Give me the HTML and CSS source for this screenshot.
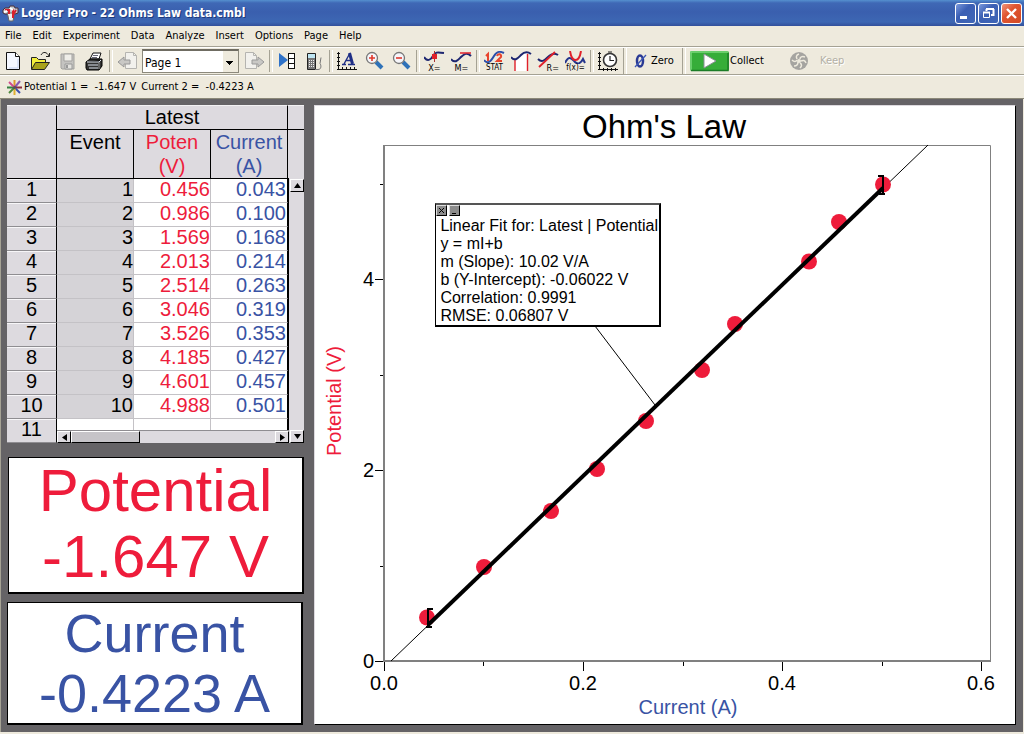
FILE: index.html
```html
<!DOCTYPE html>
<html lang="en">
<head>
<meta charset="utf-8">
<title>Logger Pro - 22 Ohms Law data.cmbl</title>
<link rel="stylesheet" href="styles.css">
</head>
<body>
<header class="titlebar">
  <svg class="logo" width="17" height="17" viewBox="0 0 17 17" aria-hidden="true">
    <path d="M1 5l2-2h4l1-2h4l1 2h3v5l-3 1H3L1 8z" fill="#c4c8ce" stroke="#4a3038"/>
    <path d="M5 8h7v3l-1 5H7l-1-5z" fill="#eee" stroke="#666"/>
    <path d="M3 5h4v4M11 4v9M14 5l-3 5" fill="none" stroke="#d8202c" stroke-width="2"/>
    <path d="M8 3l3 2M2 7l3-1" stroke="#fff" stroke-width="2"/>
  </svg>
  <h1 class="title">Logger Pro - 22 Ohms Law data.cmbl</h1>
  <div class="window-buttons">
    <button class="winbtn" aria-label="Minimize"><svg width="19" height="19" viewBox="0 0 19 19"><path d="M4 12h7v3H4z" fill="#fff"/></svg></button>
    <button class="winbtn" aria-label="Restore"><svg width="19" height="19" viewBox="0 0 19 19"><path d="M7 5h8M7.500 5v2M14.500 5v6H12M4 8.500h7" fill="none" stroke="#fff" stroke-width="2"/><path d="M4.500 8.500h6v5h-6z" fill="none" stroke="#fff"/></svg></button>
    <button class="winbtn winbtn-close" aria-label="Close"><svg width="19" height="19" viewBox="0 0 19 19"><path d="M5 5l9 9M14 5l-9 9" stroke="#fff" stroke-width="2.400"/></svg></button>
  </div>
</header>

<nav class="menubar">
  <button>File</button><button>Edit</button><button>Experiment</button><button>Data</button><button>Analyze</button><button>Insert</button><button>Options</button><button>Page</button><button>Help</button>
</nav>

<div class="toolbar">
  <button class="tool" aria-label="New"><svg width="21" height="21" viewBox="0 0 21 21"><path d="M3.500 1.500h9l4 4v13h-13z" fill="#f4f7ff" stroke="#111"/><path d="M12.500 1.500v4h4" fill="#fff" stroke="#111"/><path d="M15 8v9H6" fill="none" stroke="#c3d0f0"/></svg></button>
  <button class="tool" aria-label="Open"><svg width="21" height="21" viewBox="0 0 21 21"><path d="M1.500 18V6.500h5l2 2h7V12" fill="#f3ee3c" stroke="#222"/><path d="M1.500 18.500l4-7h14l-5 7z" fill="#a8a21c" stroke="#222"/><path d="M11 4c2-4 6-3 8 1M19.500 2v3.500H16" fill="none" stroke="#222"/></svg></button>
  <button class="tool" aria-label="Save" disabled><svg width="21" height="21" viewBox="0 0 21 21"><path d="M4 3h13v15H5l-1-1z" fill="#c4c3c0" stroke="#a3a29f"/><path d="M7 3h8v7H7z" fill="#efeee9" stroke="#a3a29f"/><path d="M8 13h7v5H8z" fill="#e4e3de" stroke="#999"/><path d="M9 14h2v3H9z" fill="#999"/></svg></button>
  <button class="tool" aria-label="Print"><svg width="21" height="21" viewBox="0 0 21 21"><path d="M6 8l3-6h8l-2 6z" fill="#fff" stroke="#111"/><path d="M9 4.500h5M8 6.500h5" stroke="#667"/><path d="M2 11l4-3h12v7l-3 4H3l-1-2z" fill="#333" stroke="#000"/><path d="M3 11h12l2-2M4 14h10M5 17h9" stroke="#dde3ee"/><path d="M15 11v7" stroke="#999"/></svg></button>
  <span class="sep"></span>
  <button class="tool" aria-label="Previous page" disabled><svg width="21" height="21" viewBox="0 0 21 21"><path d="M8.500 1.500h8l3 3v13h-11z" fill="#f2f1ed" stroke="#b5b4b0"/><path d="M16.500 1.500v3h3" fill="none" stroke="#b5b4b0"/><path d="M1 11l6-5v3h6v4H7v3z" fill="#c9c8c5" stroke="#999"/></svg></button>
  <select class="page-select" aria-label="Page"><option>Page 1</option></select>
  <button class="tool" aria-label="Next page" disabled><svg width="21" height="21" viewBox="0 0 21 21"><path d="M1.500 1.500h8l3 3v13h-11z" fill="#f2f1ed" stroke="#b5b4b0"/><path d="M9.500 1.500v3h3" fill="none" stroke="#b5b4b0"/><path d="M20 11l-6-5v3H8v4h6v3z" fill="#c9c8c5" stroke="#999"/></svg></button>
  <span class="sep"></span>
  <button class="tool" aria-label="Import data"><svg width="21" height="21" viewBox="0 0 21 21"><path d="M2 2l9 7-9 7z" fill="#2f72c8"/><path d="M12 3h5v4h-5zM12 8h5v4h-5zM12 13h5v4h-5z" fill="#fff"/><path d="M11.500 2v16M17.500 2v16M11 2.500h7M11 7.500h7M11 12.500h7M11 17.500h7" stroke="#111"/></svg></button>
  <button class="tool" aria-label="Calculator"><svg width="21" height="21" viewBox="0 0 21 21"><path d="M3.500 2.500h8v16h-8z" fill="#777" stroke="#222"/><path d="M4 3h7v4H4z" fill="#bfe6f2"/><path d="M5 9.500h6M5 11.500h6M5 13.500h6M5 15.500h6" stroke="#eee" stroke-dasharray="1 1"/><path d="M11 18.500h3c4 0 3-5 2-6l1-6" fill="none" stroke="#777"/></svg></button>
  <span class="sep"></span>
  <button class="tool" aria-label="Autoscale"><svg width="21" height="21" viewBox="0 0 21 21"><path d="M1.500 1v18M0 18.500h20M0 2.500h3M0 6.500h3M0 10.500h3M0 14.500h3M5.500 16v3M9.500 16v3M13.500 16v3M17.500 16v3" stroke="#111"/><path d="M5 13.500h4M11 13.500h7M7 13l6-11M8.500 9.500h6" stroke="#1f2f86" stroke-width="1.400"/><path d="M12.500 2l3 11" stroke="#1f2f86" stroke-width="3"/></svg></button>
  <button class="tool" aria-label="Zoom in"><svg width="21" height="21" viewBox="0 0 21 21"><path d="M12 11l6 6" stroke="#2f72b8" stroke-width="4"/><circle cx="8" cy="7" r="5.500" fill="#f6f6fa" stroke="#777" stroke-width="1.300"/><path d="M5 7h6M8 4v6" stroke="#e0382c" stroke-width="1.600"/></svg></button>
  <button class="tool" aria-label="Zoom out"><svg width="21" height="21" viewBox="0 0 21 21"><path d="M12 11l6 6" stroke="#2f72b8" stroke-width="4"/><circle cx="8" cy="7" r="5.500" fill="#f6f6fa" stroke="#777" stroke-width="1.300"/><path d="M5 7h6" stroke="#e0382c" stroke-width="1.600"/></svg></button>
  <span class="sep"></span>
  <button class="tool labelled" aria-label="Examine"><svg width="21" height="13" viewBox="0 0 21 13"><path d="M0 6c3 5 7 3 9-1s4-4 11-3" fill="none" stroke="#1d2670" stroke-width="2"/><path d="M10.500 0v11" stroke="#a33"/><path d="M8 3h5v5H8z" fill="#e0202a"/></svg><span>X=</span></button>
  <button class="tool labelled" aria-label="Tangent line"><svg width="21" height="13" viewBox="0 0 21 13"><path d="M0 8c4 5 7 1 10-2s6-5 10-1" fill="none" stroke="#1d2670" stroke-width="2"/><path d="M9 2h11" stroke="#e0202a" stroke-width="1.500"/></svg><span>M=</span></button>
  <span class="sep"></span>
  <button class="tool labelled" aria-label="Statistics"><svg width="21" height="13" viewBox="0 0 21 13"><path d="M0 9c4 5 7 1 10-4s6-5 10-3" fill="none" stroke="#2a4da8" stroke-width="2"/><path d="M2 5l2-2v7M13 5c1-3 5-2 4 1l-4 4h5" fill="none" stroke="#e8442c" stroke-width="2"/></svg><span class="narrow">STAT</span></button>
  <button class="tool" aria-label="Integral"><svg width="21" height="21" viewBox="0 0 21 21"><path d="M4 8c4 0 5-6 12-6v18H4z" fill="#fff"/><path d="M4 8v12M16.500 3v17" stroke="#e0202a" stroke-width="1.400"/><path d="M0 6c4 5 7 1 10-2s6-4 10-1" fill="none" stroke="#1d2670" stroke-width="2"/></svg></button>
  <button class="tool labelled" aria-label="Linear fit"><svg width="21" height="13" viewBox="0 0 21 13" overflow="visible"><path d="M0 8c4 4 7 1 10-2s6-5 10-2" fill="none" stroke="#1d2670" stroke-width="2"/><path d="M1 16L17 1" stroke="#e0202a" stroke-width="1.800"/></svg><span class="right">R=</span></button>
  <button class="tool labelled" aria-label="Curve fit"><svg width="21" height="13" viewBox="0 0 21 13"><path d="M0 12c4-9 7-4 10-1s6 1 8-3l2 4" fill="none" stroke="#24358c" stroke-width="2"/><path d="M5 0c2 12 9 12 11 0" fill="none" stroke="#e0202a" stroke-width="2"/></svg><span class="narrow">f(x)=</span></button>
  <span class="sep"></span>
  <button class="tool" aria-label="Data collection"><svg width="21" height="21" viewBox="0 0 21 21"><path d="M1.500 1v18M0 18.500h20M0 2.500h3M0 6.500h3M0 10.500h3M0 14.500h3M5.500 17v3M9.500 17v3M13.500 17v3M17.500 17v3" stroke="#111"/><circle cx="12" cy="9" r="6.500" fill="#fff" stroke="#333" stroke-width="1.600"/><path d="M12 5v4.500h4M10 1h4" fill="none" stroke="#222" stroke-width="1.200"/></svg></button>
  <span class="sep sep-tall"></span>
  <button class="zero"><svg width="13" height="19" viewBox="0 0 13 19" aria-hidden="true"><ellipse cx="6" cy="9" rx="3" ry="5.500" fill="none" stroke="#2a3a94" stroke-width="2.500"/><path d="M1 15L12 3" stroke="#3c57b5" stroke-width="1.300"/></svg>Zero</button>
  <span class="sep sep-tall"></span>
  <button class="collect"><svg width="40" height="22" viewBox="0 0 40 22" aria-hidden="true"><rect x="1" y="1" width="39" height="20" rx="2" fill="#36ad39"/><path d="M2 20V2h37" fill="none" stroke="#7bd77c" stroke-width="1.500"/><path d="M2 20.500h37V3" fill="none" stroke="#1b7d27" stroke-width="1.500"/><path d="M15 4l12 7-12 7z" fill="#fff" stroke="#8a8f95"/></svg>Collect</button>
  <button class="keep" disabled><svg width="20" height="20" viewBox="0 0 20 20" aria-hidden="true"><circle cx="10" cy="10" r="9" fill="#a5a4a0"/><circle cx="10" cy="10" r="2" fill="#eeeadd"/><path d="M10 3c-3 1-3 3-2 5M16 6c-3-1-5 0-5 2M17 12c-1-3-3-3-5-2M11 17c2-2 2-4 0-5M5 15c3 0 4-2 4-4M3 9c2 2 4 2 5 0" fill="none" stroke="#eeeadd" stroke-width="1.500"/></svg>Keep</button>
</div>

<div class="status">
  <svg width="17" height="17" viewBox="0 0 17 17" aria-hidden="true"><g stroke-width="2"><path d="M8.500 8V1" stroke="#e09a2c"/><path d="M9 8l5-6" stroke="#8a5ab0"/><path d="M9 8.500h7" stroke="#8a3040"/><path d="M9 9l5 5" stroke="#3b4fae"/><path d="M8.500 9v7" stroke="#e0b030"/><path d="M8 9l-5 5" stroke="#4c8a3c"/><path d="M8 8.500H1" stroke="#35803f"/><path d="M8 8L3 3" stroke="#d04c8c"/></g><circle cx="8.500" cy="8.500" r="1.500" fill="#555"/></svg>
  <span>Potential 1 =&nbsp; -1.647 V</span><span>Current 2 =&nbsp; -0.4223 A</span>
</div>

<main class="workspace">
  <section class="side">
    <div class="data">
      <table class="grid">
        <colgroup><col class="c-row"><col><col><col></colgroup>
        <thead>
          <tr class="group"><th rowspan="2" class="corner"></th><th colspan="3">Latest</th></tr>
          <tr class="names"><th>Event</th><th class="red">Poten<br>(V)</th><th class="blue">Current<br>(A)</th></tr>
        </thead>
        <tbody>
          <tr><th>1</th><td>1</td><td>0.456</td><td>0.043</td></tr>
          <tr><th>2</th><td>2</td><td>0.986</td><td>0.100</td></tr>
          <tr><th>3</th><td>3</td><td>1.569</td><td>0.168</td></tr>
          <tr><th>4</th><td>4</td><td>2.013</td><td>0.214</td></tr>
          <tr><th>5</th><td>5</td><td>2.514</td><td>0.263</td></tr>
          <tr><th>6</th><td>6</td><td>3.046</td><td>0.319</td></tr>
          <tr><th>7</th><td>7</td><td>3.526</td><td>0.353</td></tr>
          <tr><th>8</th><td>8</td><td>4.185</td><td>0.427</td></tr>
          <tr><th>9</th><td>9</td><td>4.601</td><td>0.457</td></tr>
          <tr><th>10</th><td>10</td><td>4.988</td><td>0.501</td></tr>
          <tr class="blank"><th>11</th><td></td><td></td><td></td></tr>
        </tbody>
      </table>
      <div class="vcol">
        <div class="vhead-a"></div>
        <div class="vhead-b"></div>
        <div class="vscroll">
          <button class="arrow" aria-label="Scroll up"><svg width="7" height="7" viewBox="0 0 7 7"><path d="M0 6l3.500-5L7 6z"/></svg></button>
          <button class="arrow" aria-label="Scroll down"><svg width="7" height="7" viewBox="0 0 7 7"><path d="M0 1l3.500 5L7 1z"/></svg></button>
        </div>
      </div>
      <div class="hscroll">
        <button class="arrow" aria-label="Scroll left"><svg width="7" height="7" viewBox="0 0 7 7"><path d="M6 0L1 3.500 6 7z"/></svg></button>
        <button class="thumb" aria-label="Scroll position"></button>
        <button class="arrow last" aria-label="Scroll right"><svg width="7" height="7" viewBox="0 0 7 7"><path d="M1 0l5 3.500L1 7z"/></svg></button>
      </div>
    </div>
    <div class="meter meter-v"><div>Potential</div><div>-1.647 V</div></div>
    <div class="meter meter-a"><div>Current</div><div>-0.4223 A</div></div>
  </section>

  <section class="graph">
    <svg class="plot" viewBox="315 106 700 618" role="img" aria-label="Ohm's Law">
      <text x="664" y="138" class="plot-title">Ohm's Law</text>
      <path d="M384 145.500h606.500V661" class="frame"/>
      <path d="M384 145v517M383 661h608" class="axis"/>
      <path d="M375 661.500h8M375 470.500h8M375 279.500h8M380 566.500h3M380 375.500h3M380 184.500h3M384.500 662v9M583.500 662v9M782.500 662v9M981.500 662v9M483.500 662v4M683.500 662v4M882.500 662v4" class="ticks"/>
      <g class="ylab"><text x="374" y="668">0</text><text x="374" y="477">2</text><text x="374" y="286">4</text></g>
      <g class="xlab"><text x="384" y="690">0.0</text><text x="583" y="690">0.2</text><text x="782" y="690">0.4</text><text x="981" y="690">0.6</text></g>
      <text x="688" y="714" class="xtitle">Current (A)</text>
      <text transform="translate(341 401) rotate(-90)" class="ytitle">Potential (V)</text>
      <path d="M391 661L928 145M595 326l60 79" class="thin"/>
      <g class="points"><circle cx="427" cy="617.500" r="8"/><circle cx="484" cy="567" r="8"/><circle cx="551" cy="511" r="8"/><circle cx="597" cy="469" r="8"/><circle cx="646" cy="421" r="8"/><circle cx="702" cy="370" r="8"/><circle cx="735" cy="324" r="8"/><circle cx="809" cy="261.500" r="8"/><circle cx="839" cy="222" r="8"/><circle cx="883" cy="184.500" r="8"/></g>
      <path d="M428 625L883 188" class="fit"/>
      <path d="M433 609h-5v18h4M426 627h3M878 176h5v18h-4M881 194h4" class="bracket"/>
    </svg>
    <div class="fitbox">
      <div class="fitbox-buttons"><button aria-label="Close fit"><svg width="9" height="9" viewBox="0 0 9 9"><path d="M2 2l5 5M7 2L2 7" stroke="#000"/></svg></button><button aria-label="Minimize fit"><svg width="9" height="9" viewBox="0 0 9 9"><path d="M2 7.500h4" stroke="#000"/></svg></button></div>
      Linear Fit for: Latest | Potential<br>y = mI+b<br>m (Slope): 10.02 V/A<br>b (Y-Intercept): -0.06022 V<br>Correlation: 0.9991<br>RMSE: 0.06807 V
    </div>
  </section>
</main>
</body>
</html>
```
FILE: styles.css
```css
* { box-sizing: border-box; }

body {
  margin: 0;
  min-height: 100vh;
  display: flex;
  flex-direction: column;
  background: #eeeadd;
  color: #000;
  font: 11px/14px "DejaVu Sans Condensed", "DejaVu Sans", sans-serif;
  padding-bottom: 2px;
}

button {
  margin: 0;
  padding: 0;
  border: 0;
  background: none;
  color: inherit;
  font: inherit;
}

svg { display: block; flex: none; }

/* Title bar */
.titlebar {
  height: 26px;
  display: flex;
  align-items: center;
  gap: 2px;
  padding: 0 2px;
  background: linear-gradient(#5590cf 0, #3f68b5 3px, #3a5fae 12px, #3d67b3 22px, #33509b 26px);
}
.title {
  flex: 1;
  margin: 0;
  color: #fff;
  font: bold 12px/18px "DejaVu Sans Condensed", "DejaVu Sans", sans-serif;
  text-shadow: 1px 1px 0 #1e3a7c;
}
.window-buttons { display: flex; gap: 2px; }
.winbtn {
  width: 21px;
  height: 21px;
  border: 1px solid #fff;
  border-radius: 3px;
  background: linear-gradient(135deg, #7b9add, #3b5fb4 40%, #3f66b6);
}
.winbtn-close { background: linear-gradient(135deg, #f0947a, #e05531 40%, #d24a24); }

/* Menu */
.menubar {
  height: 21px;
  display: flex;
  align-items: center;
  gap: 11px;
  padding: 0 5px;
  border-bottom: 1px solid #a5a294;
}

/* Toolbar */
.toolbar {
  height: 28px;
  display: flex;
  align-items: center;
  border-top: 1px solid #fff;
  border-bottom: 1px solid #a5a294;
}
.tool {
  width: 27px;
  height: 24px;
  display: flex;
  align-items: center;
  justify-content: center;
}
.labelled { flex-direction: column; }
.labelled span {
  font: 9px/8px "DejaVu Sans Condensed", sans-serif;
}
.labelled .narrow { font-size: 8px; }
.labelled .right { align-self: flex-end; padding-right: 3px; }
.sep {
  width: 6px;
  height: 22px;
  display: flex;
  justify-content: center;
}
.sep::before {
  content: "";
  width: 2px;
  border-left: 1px solid #a5a294;
  border-right: 1px solid #fff;
}
.sep-tall { height: 26px; }
.page-select {
  appearance: none;
  width: 97px;
  height: 24px;
  margin: 0 2px 0 1px;
  padding: 3px 2px 0;
  border: 1px solid #8c897c;
  border-top: 2px solid #6f6c62;
  border-radius: 0;
  color: #000;
  font: 12px/16px "DejaVu Sans Condensed", sans-serif;
  background:
    linear-gradient(#000, #000) right 5px top 10px / 7px 1px no-repeat,
    linear-gradient(#000, #000) right 6px top 11px / 5px 1px no-repeat,
    linear-gradient(#000, #000) right 7px top 12px / 3px 1px no-repeat,
    linear-gradient(#000, #000) right 8px top 13px / 1px 1px no-repeat,
    linear-gradient(#eeeadd, #eeeadd) right / 15px 100% no-repeat,
    #fff;
}
.zero { width: 53px; display: flex; align-items: center; gap: 4px; padding-left: 6px; }
.collect { width: 102px; display: flex; align-items: center; gap: 1px; padding-left: 2px; }
.keep { display: flex; align-items: center; gap: 11px; color: #b3b0a5; text-shadow: 1px 1px 0 #fff; }

/* Readings line */
.status {
  height: 24px;
  display: flex;
  align-items: center;
  gap: 5px;
  padding: 0 6px;
  border-top: 1px solid #fff;
  border-bottom: 1px solid #8b8878;
}
.status svg { margin-right: -4px; }

/* Workspace */
.workspace {
  flex: 1;
  display: flex;
  gap: 10px;
  padding: 6px 7px 7px 6px;
  background: #656366;
  border-left: 1px solid #a5a294;
  border-right: 1px solid #eeeadd;
  font-family: "Liberation Sans", Arial, sans-serif;
}
.side { width: 297px; flex: none; display: flex; flex-direction: column; }

/* Data table */
.data { position: relative; display: flex; background: #dddadf; }
.grid {
  width: 281px;
  table-layout: fixed;
  border-collapse: separate;
  border-spacing: 0;
  font-size: 20px;
  line-height: 24px;
}
.c-row { width: 50px; }
.grid th, .grid td {
  height: 24px;
  padding: 0;
  font-weight: normal;
}
.grid thead th {
  border-right: 1px solid #000;
  border-bottom: 1px solid #000;
  border-top: 1px solid #f2f1f3;
  vertical-align: top;
}
.grid .group th { height: 25px; line-height: 23px; }
.grid .names th { height: 48px; line-height: 24px; border-top: 0; }
.grid .names th, .vhead-b { border-bottom: 0; }
.grid .names th, .grid .group .corner { border-bottom: 1px solid #000; }
.grid tbody th {
  border-right: 1px solid #000;
  border-bottom: 1px solid #8f8d91;
  line-height: 21px;
  vertical-align: top;
  box-shadow: inset 0 1px #f7f6f8;
}
.grid tbody td {
  background: #fff;
  border-right: 1px solid #c4c2c6;
  border-bottom: 1px solid #c4c2c6;
  text-align: right;
  line-height: 21px;
  vertical-align: top;
}
.grid tbody td:nth-child(2) { background: #d5d3d7; }
.grid tbody td:nth-child(3), .grid .red { color: #ee1c3b; }
.grid tbody td:nth-child(4), .grid .blue { color: #3953a4; }
.grid tbody td:nth-child(4) { border-right-color: #000; padding-right: 1px; }
.grid tbody .blank td { background: #fff; }
.vcol { flex: 1; display: flex; flex-direction: column; }
.vhead-a { height: 25px; border-bottom: 1px solid #000; border-top: 1px solid #f2f1f3; }
.vhead-b { height: 48px; }
.vscroll {
  flex: 1;
  display: flex;
  flex-direction: column;
  justify-content: space-between;
  padding: 1px 0 0 2px;
  border-left: 1px solid #000;
  padding-left: 1px;
}
.arrow {
  width: 14px;
  height: 13px;
  display: flex;
  align-items: center;
  justify-content: center;
  background: #dddadf;
  border: 1px solid #fff;
  border-right-color: #000;
  border-bottom-color: #000;
}
.hscroll {
  position: absolute;
  left: 50px;
  right: 15px;
  bottom: 0;
  height: 13px;
  display: flex;
  background: #dddadf;
  border-top: 1px solid #8f8d91;
}
.hscroll .arrow { height: 12px; }
.hscroll .last { margin-left: auto; }
.thumb {
  width: 69px;
  background: #c6c4c8;
  border: 1px solid #fff;
  border-right-color: #000;
  border-bottom-color: #000;
}

/* Meters */
.meter {
  border: 1px solid #000;
  border-right-width: 2px;
  border-bottom-width: 2px;
  background: #fff;
  text-align: center;
}
.meter-v {
  height: 137px;
  margin: 14px 0 8px 1px;
  color: #ee1c3b;
  font-size: 60px;
  line-height: 66px;
}
.meter-a {
  flex: 1;
  margin-right: 1px;
  color: #3953a4;
  font-size: 54px;
  line-height: 60px;
}

/* Graph */
.graph {
  position: relative;
  flex: 1;
  min-width: 0;
  align-self: flex-start;
  background: #fff;
  border: 1px solid #dddadf;
  border-right-color: #000;
  border-bottom-color: #000;
}
.plot { width: 100%; height: auto; font-size: 20px; }
.plot-title { font-size: 33px; text-anchor: middle; }
.frame { fill: none; stroke: #808080; }
.axis { fill: none; stroke: #808080; stroke-width: 2; }
.ticks { stroke: #000; }
.ylab { text-anchor: end; }
.xlab, .xtitle, .ytitle { text-anchor: middle; }
.xtitle { fill: #3953a4; }
.ytitle { fill: #ee1c3b; }
.thin { fill: none; stroke: #000; }
.points { fill: #ee1c3b; }
.fit { stroke: #000; stroke-width: 4; }
.bracket { fill: none; stroke: #000; stroke-width: 2; }
.fitbox {
  position: absolute;
  left: 17.2%;
  top: 15.7%;
  padding: 12px 1px 0 4px;
  border: 2px solid #000;
  border-top: 2px solid #555;
  border-left-width: 1px;
  background: #fff;
  font-size: 16px;
  line-height: 18px;
  white-space: nowrap;
}
.fitbox-buttons {
  position: absolute;
  left: 0;
  top: 0;
  display: flex;
  gap: 2px;
}
.fitbox-buttons button {
  background: #8c8c8c;
  border: 1px solid #ddd;
  border-right-color: #000;
  border-bottom-color: #000;
}
```
